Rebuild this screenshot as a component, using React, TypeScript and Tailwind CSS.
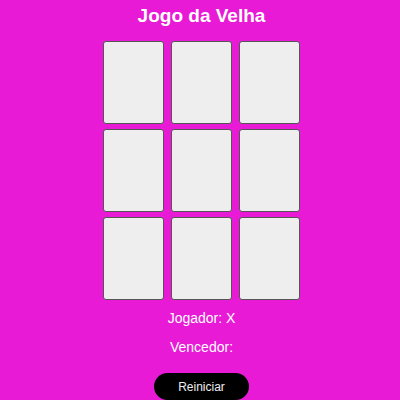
import { useState } from "react";

const LINES = [
  [0, 1, 2],
  [3, 4, 5],
  [6, 7, 8],
  [0, 3, 6],
  [1, 4, 7],
  [2, 5, 8],
  [0, 4, 8],
  [2, 4, 6],
];

const EMPTY: string[] = Array(9).fill("");

function findWinner(cells: string[]): string {
  const line = LINES.find(
    ([a, b, c]) => cells[a] && cells[a] === cells[b] && cells[a] === cells[c],
  );
  return line ? cells[line[0]] : "";
}

export default function App() {
  const [cells, setCells] = useState<string[]>(EMPTY);
  const player = cells.filter(Boolean).length % 2 === 0 ? "X" : "O";
  const winner = findWinner(cells);

  function play(index: number) {
    if (cells[index] || winner) return;
    setCells(cells.map((cell, i) => (i === index ? player : cell)));
  }

  return (
    <main className="flex min-h-screen flex-col items-center bg-[#e81ad6] pl-[3px] font-['Liberation_Sans',Arial,sans-serif] text-white">
      <h1 className="pt-1 text-[19px] leading-6 font-bold">Jogo da Velha</h1>
      <div className="mt-[13px] grid grid-cols-3 gap-x-[7px] gap-y-[5px]">
        {cells.map((cell, index) => (
          <button
            key={index}
            type="button"
            aria-label={`Casa ${index + 1}`}
            onClick={() => play(index)}
            className="h-[83px] w-[61px] rounded-[3px] border border-[#555555] bg-[#eeeeee] text-4xl text-black"
          >
            {cell}
          </button>
        ))}
      </div>
      <p className="mt-2 text-sm leading-5">Jogador: {player}</p>
      <p className="mt-[9px] text-sm leading-5">Vencedor: {winner}</p>
      <button
        type="button"
        onClick={() => setCells(EMPTY)}
        className="mt-4 h-[27px] rounded-full bg-black px-6 text-xs text-[#eeeeee]"
      >
        Reiniciar
      </button>
    </main>
  );
}
